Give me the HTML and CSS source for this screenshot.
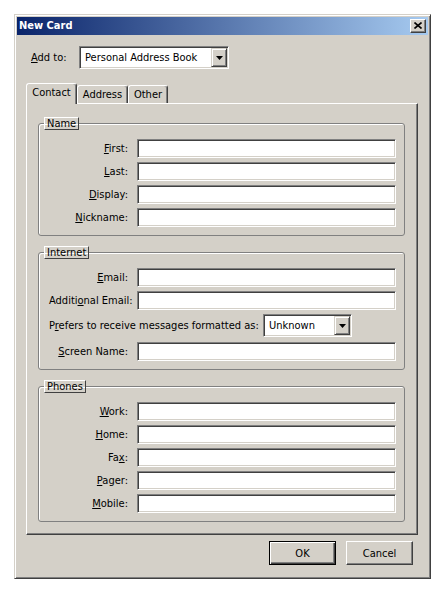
FILE: index.html
```html
<!DOCTYPE html>
<html>
<head>
<meta charset="utf-8">
<title>New Card</title>
<link rel="stylesheet" href="styles.css">
</head>
<body>
<div class="window">
  <div class="titlebar">
    <span class="title">New Card</span>
    <span class="close"><svg width="8" height="7" viewBox="0 0 8 7"><path d="M0.5 0.5 L7.5 6.5 M7.5 0.5 L0.5 6.5" stroke="#000" stroke-width="1.6"/></svg></span>
  </div>
  <div class="body">
    <div class="addto">
      <span class="addto-label"><u>A</u>dd to:</span>
      <div class="combo combo-book">
        <span class="combo-text">Personal Address Book</span>
        <span class="combo-btn"><svg width="7" height="4" viewBox="0 0 7 4"><path d="M0 0h7L3.5 4z" fill="#000"/></svg></span>
      </div>
    </div>
    <div class="tabs">
      <div class="tab tab-contact selected">Contact</div>
      <div class="tab tab-address">Address</div>
      <div class="tab tab-other">Other</div>
    </div>
    <div class="panel">
      <fieldset class="group">
        <legend class="caption">Name</legend>
        <div class="rows">
          <span class="lbl"><u>F</u>irst:</span><span class="field"></span>
          <span class="lbl"><u>L</u>ast:</span><span class="field"></span>
          <span class="lbl"><u>D</u>isplay:</span><span class="field"></span>
          <span class="lbl"><u>N</u>ickname:</span><span class="field"></span>
        </div>
      </fieldset>
      <fieldset class="group group-next">
        <legend class="caption">Internet</legend>
        <div class="rows">
          <span class="lbl"><u>E</u>mail:</span><span class="field"></span>
          <span class="lbl">Additi<u>o</u>nal Email:</span><span class="field"></span>
          <div class="prefers">
            <span class="prefers-text">P<u>r</u>efers to receive messages formatted as:</span>
            <div class="combo combo-format">
              <span class="combo-text">Unknown</span>
              <span class="combo-btn"><svg width="7" height="4" viewBox="0 0 7 4"><path d="M0 0h7L3.5 4z" fill="#000"/></svg></span>
            </div>
          </div>
          <span class="lbl"><u>S</u>creen Name:</span><span class="field"></span>
        </div>
      </fieldset>
      <fieldset class="group group-next">
        <legend class="caption">Phones</legend>
        <div class="rows">
          <span class="lbl"><u>W</u>ork:</span><span class="field"></span>
          <span class="lbl"><u>H</u>ome:</span><span class="field"></span>
          <span class="lbl">Fa<u>x</u>:</span><span class="field"></span>
          <span class="lbl"><u>P</u>ager:</span><span class="field"></span>
          <span class="lbl"><u>M</u>obile:</span><span class="field"></span>
        </div>
      </fieldset>
    </div>
    <div class="buttons">
      <button class="btn btn-default">OK</button>
      <button class="btn">Cancel</button>
    </div>
  </div>
</div>
</body>
</html>
```
FILE: styles.css
```css
html, body {
  margin: 0;
  padding: 0;
  background: #ffffff;
}
body {
  font-family: "DejaVu Sans Condensed", "DejaVu Sans", sans-serif;
  font-stretch: condensed;
  font-size: 11px;
  color: #000;
}
.window {
  margin: 14px 0 0 14px;
  width: 417px;
  height: 565px;
  box-sizing: border-box;
  background: #d4d0c8;
  border: 1px solid;
  border-color: #d4d0c8 #404040 #404040 #d4d0c8;
  box-shadow: inset 1px 1px 0 #fff, inset -1px -1px 0 #808080;
  padding: 2px;
  display: flex;
  flex-direction: column;
}
.titlebar {
  height: 18px;
  flex: none;
  background: linear-gradient(to right, #0a246a, #a6caf0);
  display: flex;
  align-items: center;
  justify-content: space-between;
  padding: 0 2px 0 2px;
  color: #fff;
  font-weight: bold;
}
.title {
  line-height: 18px;
}
.close {
  width: 16px;
  height: 14px;
  box-sizing: border-box;
  background: #d4d0c8;
  border: 1px solid;
  border-color: #fff #404040 #404040 #fff;
  box-shadow: inset -1px -1px 0 #808080;
  display: flex;
  align-items: center;
  justify-content: center;
  padding: 0 1px 1px 0;
}
.close svg { display: block; }
.body {
  flex: 1;
  display: flex;
  flex-direction: column;
}
.addto {
  display: flex;
  align-items: center;
  margin: 11px 0 0 14px;
  height: 23px;
}
.addto-label {
  width: 48px;
}
.combo {
  display: flex;
  align-items: center;
  height: 23px;
  box-sizing: border-box;
  background: #fff;
  border: 1px solid;
  border-color: #808080 #fff #fff #808080;
  box-shadow: inset 1px 1px 0 #404040, inset -1px -1px 0 #d4d0c8;
  padding: 1px;
}
.combo-book { width: 150px; }
.combo-format { width: 89px; }
.combo-text {
  flex: 1;
  padding-left: 4px;
  white-space: nowrap;
}
.combo-btn {
  width: 16px;
  height: 19px;
  box-sizing: border-box;
  background: #d4d0c8;
  border: 1px solid;
  border-color: #d4d0c8 #404040 #404040 #d4d0c8;
  box-shadow: inset 1px 1px 0 #fff, inset -1px -1px 0 #808080;
  display: flex;
  align-items: center;
  justify-content: center;
}
.combo-btn svg { display: block; }
.tabs {
  display: flex;
  align-items: flex-end;
  margin: 14px 0 0 9px;
  height: 20px;
  position: relative;
  z-index: 1;
}
.tab {
  height: 18px;
  box-sizing: border-box;
  background: #d4d0c8;
  border: 1px solid;
  border-bottom: none;
  border-color: #fff #404040 transparent #fff;
  box-shadow: inset -1px 0 0 #808080;
  border-radius: 3px 3px 0 0;
  text-align: center;
  line-height: 16px;
  padding-top: 1px;
}
.tab.selected {
  height: 21px;
  margin-bottom: -1px;
  line-height: 16px;
  padding-top: 1px;
}
.tab-contact { width: 51px; }
.tab-address { width: 51px; }
.tab-other { width: 40px; }
.panel {
  margin-left: 9px;
  width: 392px;
  height: 432px;
  box-sizing: border-box;
  border: 1px solid;
  border-color: #fff #404040 #404040 #fff;
  box-shadow: inset -1px -1px 0 #808080;
  padding: 13px 12px 0 11px;
}
.group {
  margin: 0;
  padding: 0;
  min-width: 0;
  border: 1px solid #808080;
  border-radius: 3px;
  box-shadow: inset 1px 1px 0 #fff;
}
.group-next {
  margin-top: 10px;
}
.caption {
  margin-left: 5px;
  padding: 0 2px;
  height: 13px;
  box-sizing: border-box;
  line-height: 11px;
  border: 1px solid;
  border-color: #fff #404040 #404040 #fff;
}
.rows {
  display: grid;
  grid-template-columns: 79px 259px;
  column-gap: 9px;
  row-gap: 4px;
  padding: 9px 8px 8px 10px;
  align-items: center;
}
.lbl {
  text-align: right;
  white-space: nowrap;
}
.field {
  display: block;
  height: 19px;
  box-sizing: border-box;
  background: #fff;
  border: 1px solid;
  border-color: #808080 #fff #fff #808080;
  box-shadow: inset 1px 1px 0 #404040, inset -1px -1px 0 #d4d0c8;
}
.prefers {
  grid-column: 1 / 3;
  display: flex;
  align-items: flex-start;
  height: 24px;
}
.prefers-text {
  width: 214px;
  line-height: 23px;
  white-space: nowrap;
}
.buttons {
  display: flex;
  justify-content: flex-end;
  gap: 10px;
  margin-top: 6px;
  padding-right: 15px;
}
.btn {
  width: 67px;
  height: 24px;
  box-sizing: border-box;
  margin: 0;
  padding: 0;
  font: inherit;
  color: #000;
  background: #d4d0c8;
  border: 1px solid;
  border-color: #fff #404040 #404040 #fff;
  box-shadow: inset -1px -1px 0 #808080;
  border-radius: 0;
}
.btn-default {
  border-color: #000;
  box-shadow: inset 1px 1px 0 #fff, inset -1px -1px 0 #404040, inset -2px -2px 0 #808080;
}
```
